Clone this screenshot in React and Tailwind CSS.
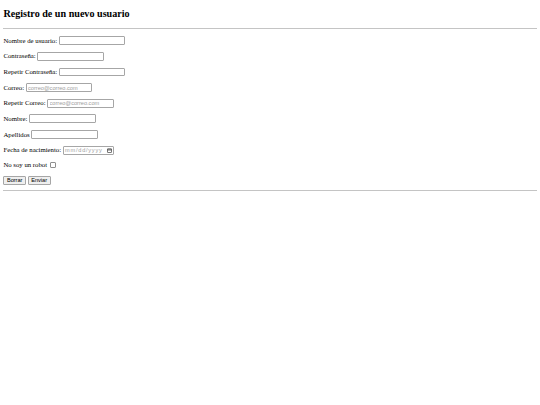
import React from 'react';

const field =
  "box-border h-[8.9px] w-[66.5px] rounded-[1px] border border-[#a6a6a6] bg-white px-[1.3px] font-['Liberation_Sans',Arial,sans-serif] text-[5.625px] text-black outline-none placeholder:text-[#9d9d9d]";

const button =
  "box-border h-[8.9px] rounded-[1px] border border-[#a6a6a6] bg-[#efefef] px-[2.5px] font-['Liberation_Sans',Arial,sans-serif] text-[5.625px] leading-none text-black";

function Row({ label, children }) {
  return (
    <p className="my-[6.75px] flex h-[8.9px] items-center gap-[1.7px]">
      <span>{label}</span>
      {children}
    </p>
  );
}

function CalendarIcon() {
  return (
    <svg width="5" height="5" viewBox="0 0 10 10" fill="none" stroke="#333" strokeWidth="1.3">
      <rect x="1" y="1.5" width="8" height="7.5" rx="0.6" />
      <path d="M1 3.8h8" strokeWidth="1.8" />
    </svg>
  );
}

export default function App() {
  return (
    <div className="min-h-screen bg-white px-[3.4px] font-['Liberation_Serif','Times_New_Roman',serif] text-[6.75px] text-black">
      <h2 className="mt-[8.4px] mb-[8.4px] text-[10.125px] leading-[1.15] font-bold">
        Registro de un nuevo usuario
      </h2>
      <hr className="border-[#c4c4c4]" />

      <form className="pt-[0.1px]">
        <Row label="Nombre de usuario:">
          <input type="text" className={field} />
        </Row>
        <Row label="Contraseña:">
          <input type="password" className={field} />
        </Row>
        <Row label="Repetir Contraseña:">
          <input type="password" className={field} />
        </Row>
        <Row label="Correo:">
          <input type="email" placeholder="correo@correo.com" className={field} />
        </Row>
        <Row label="Repetir Correo:">
          <input type="email" placeholder="correo@correo.com" className={field} />
        </Row>
        <Row label="Nombre:">
          <input type="text" className={field} />
        </Row>
        <Row label="Apellidos">
          <input type="text" className={field} />
        </Row>
        <Row label="Fecha de nacimiento:">
          <span className="box-border inline-flex h-[8.9px] w-[51.5px] items-center justify-between rounded-[1px] border border-[#a6a6a6] bg-white pr-[1.8px] pl-[1.3px] font-['Liberation_Sans',Arial,sans-serif] text-[5.625px] tracking-[0.75px] text-[#9d9d9d]">
            mm/dd/yyyy
            <CalendarIcon />
          </span>
        </Row>
        <p className="my-[6.75px] flex h-[8px] items-center gap-[1.7px]">
          <span>No soy un robot</span>
          <input
            type="checkbox"
            className="ml-[1.5px] box-border h-[5.8px] w-[5.8px] appearance-none rounded-[1px] border border-[#8f8f8f] bg-white"
          />
        </p>
        <div className="flex gap-[1.7px]">
          <button type="reset" className={button}>
            Borrar
          </button>
          <button type="submit" className={button}>
            Enviar
          </button>
        </div>
      </form>

      <hr className="mt-[4.5px] border-[#c4c4c4]" />
    </div>
  );
}
